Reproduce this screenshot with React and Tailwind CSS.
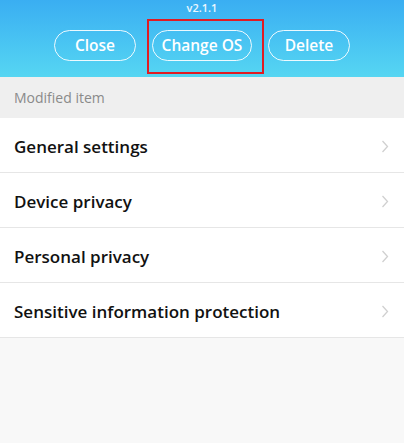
const items = [
  'General settings',
  'Device privacy',
  'Personal privacy',
  'Sensitive information protection',
];

function Chevron() {
  return (
    <svg className="w-[8px] h-[13px] text-[#d0d0d0]" viewBox="0 0 8 13" fill="none" stroke="currentColor" strokeWidth="1.3">
      <polyline points="1.5 1 6.5 6.5 1.5 12" />
    </svg>
  );
}

export default function App() {
  return (
    <div className="w-[404px] h-[443px] bg-[#f8f8f8] font-['Open_Sans',sans-serif] overflow-hidden">
      {/* Header */}
      <div className="h-[77px] bg-gradient-to-b from-[#3aaef2] to-[#56d6f2] flex flex-col items-center">
        <div className="text-[11px] leading-[14px] mt-[1px] text-white/90 font-semibold">v2.1.1</div>
        <div className="flex items-center gap-[16px] mt-[15px]">
          <button className="w-[82px] h-[31px] rounded-full border-[1.5px] border-white/90 text-white text-[15.5px] font-semibold">
            Close
          </button>
          <div className="relative">
            <button className="w-[100px] h-[31px] rounded-full border-[1.5px] border-white/90 text-white text-[15.5px] font-semibold">
              Change OS
            </button>
            <div className="absolute left-[-5px] right-[-12px] top-[-11px] bottom-[-13px] border-2 border-[#e11b22]" />
          </div>
          <button className="w-[82px] h-[31px] rounded-full border-[1.5px] border-white/90 text-white text-[15.5px] font-semibold">
            Delete
          </button>
        </div>
      </div>

      {/* Section label */}
      <div className="h-[41px] bg-[#efefef] flex items-center px-[14px]">
        <span className="text-[14px] text-[#8a8a8a] font-medium">Modified item</span>
      </div>

      {/* List */}
      <div className="bg-white">
        {items.map((label) => (
          <div key={label} className="h-[55px] flex items-center justify-between pl-[14px] pr-[15px] pt-[3px] border-b border-[#e6e6e6]">
            <span className="text-[17px] text-[#111] font-semibold">{label}</span>
            <Chevron />
          </div>
        ))}
      </div>
    </div>
  );
}
